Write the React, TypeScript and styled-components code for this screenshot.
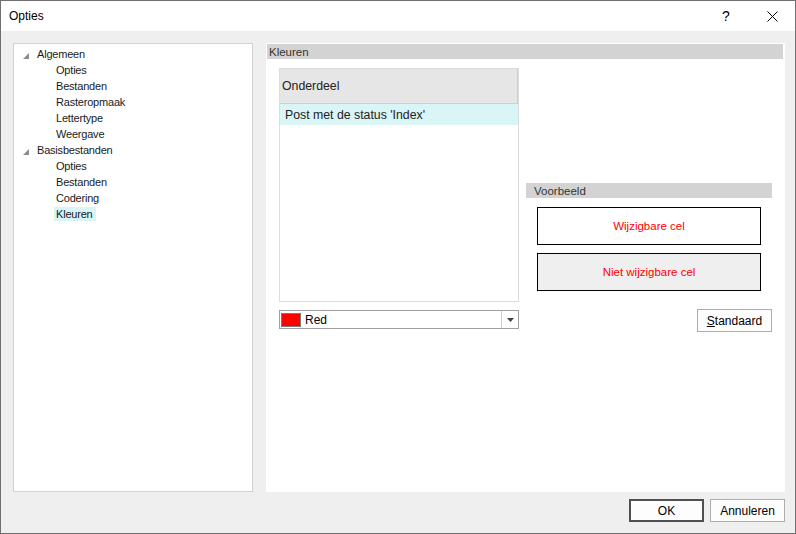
import React from 'react';
import styled, { createGlobalStyle } from 'styled-components';

const GlobalStyle = createGlobalStyle`
  html, body {
    margin: 0;
    padding: 0;
    background: #ffffff;
  }
  body {
    font-family: "Liberation Sans", Arial, sans-serif;
    font-size: 12px;
    color: #000;
  }
`;

const Window = styled.div`
  width: 796px;
  height: 534px;
  box-sizing: border-box;
  border: 1px solid #707070;
  background: #efefef;
  display: flex;
  flex-direction: column;
`;

const TitleBar = styled.div`
  height: 30px;
  background: #ffffff;
  display: flex;
  align-items: center;
  padding-left: 8px;
  flex-shrink: 0;
`;

const Title = styled.div`
  flex: 1;
  font-size: 12px;
`;

const TitleButton = styled.div`
  width: 46px;
  height: 30px;
  display: flex;
  align-items: center;
  justify-content: center;
  font-size: 14px;
`;

const Body = styled.div`
  flex: 1;
  display: flex;
  flex-direction: column;
  padding: 12px 10px 11px 12px;
`;

const Panels = styled.div`
  display: flex;
  gap: 13px;
  height: 449px;
`;

const TreePanel = styled.div`
  width: 240px;
  box-sizing: border-box;
  background: #ffffff;
  border: 1px solid #d2d2d2;
  padding-top: 2px;
  font-size: 11px;
  letter-spacing: -0.2px;
  color: #1a1a1a;
`;

const TreeRow = styled.div<{ $level: number }>`
  height: 16px;
  display: flex;
  align-items: center;
  padding-left: ${p => (p.$level === 0 ? 9 : 40)}px;
`;

const Expander = styled.svg`
  width: 6px;
  height: 6px;
  margin-right: 6px;
  margin-top: 3px;
`;

const TreeLabel = styled.span<{ $selected?: boolean }>`
  padding: 1px 3px 1px 2px;
  background: ${p => (p.$selected ? '#d9f4f4' : 'transparent')};
`;

const ContentPanel = styled.div`
  width: 519px;
  background: #ffffff;
  padding: 1px 2px 0 1px;
  box-sizing: border-box;
`;

const SectionHeader = styled.div<{ $indent: number }>`
  height: 15px;
  background: #d3d3d3;
  color: #333;
  display: flex;
  align-items: center;
  padding-left: ${p => p.$indent}px;
  font-size: 11.5px;
`;

const Columns = styled.div`
  display: flex;
  padding-left: 12px;
  margin-top: 9px;
  gap: 7px;
`;

const LeftColumn = styled.div`
  width: 240px;
  display: flex;
  flex-direction: column;
  gap: 8px;
`;

const Grid = styled.div`
  height: 234px;
  box-sizing: border-box;
  border: 1px solid #dcdcdc;
  display: flex;
  flex-direction: column;
`;

const GridHeader = styled.div`
  height: 35px;
  background: #e6e6e6;
  border-right: 1px solid #cfcfcf;
  border-bottom: 1px solid #cfcfcf;
  display: flex;
  align-items: center;
  padding-left: 2px;
  box-sizing: border-box;
  font-size: 12.3px;
  color: #222;
`;

const GridRow = styled.div<{ $selected?: boolean }>`
  height: 21px;
  display: flex;
  align-items: center;
  padding-left: 5px;
  background: ${p => (p.$selected ? '#d9f5f5' : '#fff')};
  font-size: 12.3px;
  color: #222;
`;

const Combo = styled.div`
  height: 19px;
  box-sizing: border-box;
  border: 1px solid #a0a0a0;
  display: flex;
  align-items: center;
  padding-left: 1px;
`;

const Swatch = styled.div<{ $color: string }>`
  width: 20px;
  height: 14px;
  background: ${p => p.$color};
  border: 1px solid #7a7a7a;
  box-sizing: border-box;
  margin-right: 4px;
`;

const ComboText = styled.span`
  flex: 1;
`;

const ComboArrow = styled.div`
  width: 16px;
  height: 17px;
  border-left: 1px solid #cfcfcf;
  display: flex;
  align-items: center;
  justify-content: center;
`;

const RightColumn = styled.div`
  width: 246px;
  display: flex;
  flex-direction: column;
  padding-top: 115px;
`;

const PreviewList = styled.div`
  display: flex;
  flex-direction: column;
  gap: 8px;
  padding: 9px 11px 0 11px;
`;

const PreviewCell = styled.div<{ $readonly?: boolean }>`
  height: 38px;
  box-sizing: border-box;
  border: 1px solid #000;
  background: ${p => (p.$readonly ? '#efefef' : '#fff')};
  color: #ff0000;
  font-size: 11.5px;
  display: flex;
  align-items: center;
  justify-content: center;
`;

const ButtonRow = styled.div`
  display: flex;
  justify-content: flex-end;
`;

const Button = styled.button<{ $default?: boolean }>`
  width: 75px;
  height: 23px;
  box-sizing: border-box;
  background: #fdfdfd;
  border: ${p => (p.$default ? '2px solid #505050' : '1px solid #adadad')};
  font-family: "Liberation Sans", Arial, sans-serif;
  font-size: 12px;
  color: #000;
  padding: 0;
`;

const StandaardWrap = styled(ButtonRow)`
  margin-top: 18px;
`;

const Footer = styled.div`
  display: flex;
  justify-content: flex-end;
  gap: 6px;
  margin-top: 7px;
`;

const treeGroups = [
  { title: 'Algemeen', children: ['Opties', 'Bestanden', 'Rasteropmaak', 'Lettertype', 'Weergave'] },
  { title: 'Basisbestanden', children: ['Opties', 'Bestanden', 'Codering', 'Kleuren'] },
];

const App: React.FC = () => {
  return (
    <>
      <GlobalStyle />
      <Window>
        <TitleBar>
          <Title>Opties</Title>
          <TitleButton>?</TitleButton>
          <TitleButton>
            <svg width="11" height="11" viewBox="0 0 11 11">
              <path d="M0.5 0.5 L10.5 10.5 M10.5 0.5 L0.5 10.5" stroke="#000" strokeWidth="1" />
            </svg>
          </TitleButton>
        </TitleBar>
        <Body>
          <Panels>
            <TreePanel>
              {treeGroups.map(group => (
                <React.Fragment key={group.title}>
                  <TreeRow $level={0}>
                    <Expander viewBox="0 0 6 6">
                      <path d="M6 0 L6 6 L0 6 Z" fill="#8c8c8c" />
                    </Expander>
                    <TreeLabel>{group.title}</TreeLabel>
                  </TreeRow>
                  {group.children.map(child => (
                    <TreeRow key={group.title + child} $level={1}>
                      <TreeLabel $selected={group.title === 'Basisbestanden' && child === 'Kleuren'}>
                        {child}
                      </TreeLabel>
                    </TreeRow>
                  ))}
                </React.Fragment>
              ))}
            </TreePanel>
            <ContentPanel>
              <SectionHeader $indent={2}>Kleuren</SectionHeader>
              <Columns>
                <LeftColumn>
                  <Grid>
                    <GridHeader>Onderdeel</GridHeader>
                    <GridRow $selected>Post met de status 'Index'</GridRow>
                  </Grid>
                  <Combo>
                    <Swatch $color="#ff0000" />
                    <ComboText>Red</ComboText>
                    <ComboArrow>
                      <svg width="7" height="4" viewBox="0 0 7 4">
                        <path d="M0 0 L7 0 L3.5 4 Z" fill="#444" />
                      </svg>
                    </ComboArrow>
                  </Combo>
                </LeftColumn>
                <RightColumn>
                  <SectionHeader $indent={8}>Voorbeeld</SectionHeader>
                  <PreviewList>
                    <PreviewCell>Wijzigbare cel</PreviewCell>
                    <PreviewCell $readonly>Niet wijzigbare cel</PreviewCell>
                  </PreviewList>
                  <StandaardWrap>
                    <Button>
                      <u>S</u>tandaard
                    </Button>
                  </StandaardWrap>
                </RightColumn>
              </Columns>
            </ContentPanel>
          </Panels>
          <Footer>
            <Button $default>OK</Button>
            <Button>Annuleren</Button>
          </Footer>
        </Body>
      </Window>
    </>
  );
};

export default App;
